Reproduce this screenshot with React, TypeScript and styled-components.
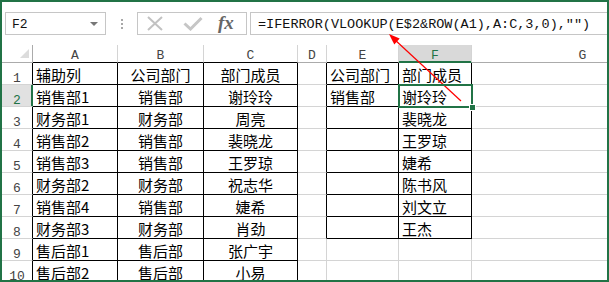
import styled, { createGlobalStyle } from 'styled-components';

const GREEN = '#217346';
const GRID = '#d4d4d4';
const HEAD_LINE = '#ababab';
const BLACK = '#000';

const GlobalStyle = createGlobalStyle`
  html, body {
    margin: 0;
    padding: 0;
    background: #fff;
  }
  body {
    font-family: "Noto Sans CJK SC", sans-serif;
  }
`;

// columns of the sheet
const columns = [
  { key: 'A', width: 85, align: 'left' },
  { key: 'B', width: 86, align: 'center' },
  { key: 'C', width: 94, align: 'center' },
  { key: 'D', width: 29, align: 'left' },
  { key: 'E', width: 72, align: 'left' },
  { key: 'F', width: 73, align: 'left' },
  { key: 'G', width: 222, align: 'left' },
] as const;

const rows: string[][] = [
  ['辅助列', '公司部门', '部门成员', '', '公司部门', '部门成员', ''],
  ['销售部1', '销售部', '谢玲玲', '', '销售部', '谢玲玲', ''],
  ['财务部1', '财务部', '周亮', '', '', '裴晓龙', ''],
  ['销售部2', '销售部', '裴晓龙', '', '', '王罗琼', ''],
  ['销售部3', '销售部', '王罗琼', '', '', '婕希', ''],
  ['财务部2', '财务部', '祝志华', '', '', '陈书风', ''],
  ['销售部4', '销售部', '婕希', '', '', '刘文立', ''],
  ['财务部3', '财务部', '肖劲', '', '', '王杰', ''],
  ['售后部1', '售后部', '张广宇', '', '', '', ''],
  ['售后部2', '售后部', '小易', '', '', '', ''],
];

const selected = { row: 2, col: 5 };

// cells with a thin black frame
const bordered = (r: number, c: number) =>
  (r >= 1 && r <= 10 && c >= 0 && c <= 2) || (r >= 1 && r <= 8 && (c === 4 || c === 5));

export default function App() {
  return (
    <>
      <GlobalStyle />
      <Frame>
        <FormulaBar>
          <NameBox>
            <span>F2</span>
            <DropArrow />
          </NameBox>
          <Dots>
            <i />
            <i />
            <i />
          </Dots>
          <IconBox>
            <svg width="16" height="15" viewBox="0 0 16 15">
              <path d="M1 1 L15 14 M15 1 L1 14" stroke="#c2c2c2" strokeWidth="2" fill="none" />
            </svg>
            <svg width="20" height="15" viewBox="0 0 20 15" style={{ marginLeft: 20 }}>
              <path d="M1.5 7.5 L7.5 13 L18.5 2" stroke="#c6c6c6" strokeWidth="3" fill="none" />
            </svg>
            <Fx>fx</Fx>
          </IconBox>
          <FormulaInput>=IFERROR(VLOOKUP(E$2&amp;ROW(A1),A:C,3,0),"")</FormulaInput>
        </FormulaBar>

        <Sheet>
          <Corner>
            <CornerMark />
          </Corner>
          {columns.map((col, c) => (
            <ColHeader
              key={col.key}
              $bottom={bordered(1, c) ? BLACK : HEAD_LINE}
              $selected={c === selected.col}
            >
              {col.key}
            </ColHeader>
          ))}

          {rows.map((row, i) => {
            const r = i + 1;
            return [
              <RowHeader key={`h${r}`} $selected={r === selected.row}>
                {r}
              </RowHeader>,
              ...row.map((value, c) => {
                const right = bordered(r, c) || bordered(r, c + 1) ? BLACK : GRID;
                const bottom = bordered(r, c) || bordered(r + 1, c) ? BLACK : GRID;
                const isSel = r === selected.row && c === selected.col;
                return (
                  <Cell
                    key={`${r}-${c}`}
                    $right={right}
                    $bottom={bottom}
                    $align={columns[c].align}
                    $active={isSel}
                  >
                    {value}
                    {isSel && (
                      <Selection>
                        <FillHandle />
                      </Selection>
                    )}
                  </Cell>
                );
              }),
            ];
          })}
        </Sheet>

        <ArrowLayer viewBox="0 0 609 282" width="609" height="282">
          <line x1="461" y1="101" x2="394" y2="39" stroke="#f00" strokeWidth="1.2" />
          <polygon points="389,34 399.7,38.6 394.3,44.4" fill="#f00" />
        </ArrowLayer>
      </Frame>
    </>
  );
}

const Frame = styled.div`
  position: relative;
  box-sizing: border-box;
  width: 609px;
  height: 282px;
  border: 2px solid ${GREEN};
  overflow: hidden;
  background: #fff;
`;

const FormulaBar = styled.div`
  display: flex;
  align-items: flex-start;
  height: 43px;
  box-sizing: border-box;
  padding: 10px 0 0 3px;
`;

const NameBox = styled.div`
  box-sizing: border-box;
  width: 101px;
  height: 23px;
  border: 1px solid #c6c6c6;
  display: flex;
  align-items: center;
  padding: 1px 6px 0 6px;
  font-family: "Liberation Mono", monospace;
  font-size: 13px;
  color: #111;
`;

const DropArrow = styled.span`
  margin-left: auto;
  margin-right: 1px;
  width: 0;
  height: 0;
  border-left: 4px solid transparent;
  border-right: 4px solid transparent;
  border-top: 4px solid #777;
`;

const Dots = styled.div`
  width: 31px;
  height: 23px;
  display: flex;
  flex-direction: column;
  align-items: center;
  justify-content: center;
  gap: 2px;

  i {
    display: block;
    width: 2px;
    height: 2px;
    background: #a8a8a8;
  }
`;

const IconBox = styled.div`
  box-sizing: border-box;
  width: 110px;
  height: 23px;
  border: 1px solid #c6c6c6;
  display: flex;
  align-items: center;
  padding-left: 9px;
`;

const Fx = styled.span`
  margin-left: 15px;
  font-family: "Liberation Serif", serif;
  font-style: italic;
  font-weight: bold;
  font-size: 19px;
  line-height: 1;
  color: #666;
  margin-top: -2px;
`;

const FormulaInput = styled.div`
  flex: 1;
  box-sizing: border-box;
  height: 23px;
  margin-left: 3px;
  border: 1px solid #c6c6c6;
  border-right: none;
  display: flex;
  align-items: center;
  padding: 1px 0 0 7px;
  font-family: "Liberation Mono", monospace;
  font-size: 13.5px;
  color: #111;
  white-space: nowrap;
`;

const Sheet = styled.div`
  display: grid;
  grid-template-columns: 31px ${columns.map((c) => `${c.width}px`).join(' ')};
  grid-template-rows: 18px;
  grid-auto-rows: 22px;
  width: max-content;
`;

const Corner = styled.div`
  position: relative;
  box-sizing: border-box;
  border-right: 1px solid ${HEAD_LINE};
  border-bottom: 1px solid ${HEAD_LINE};
`;

const CornerMark = styled.span`
  position: absolute;
  right: 3px;
  bottom: 4px;
  width: 0;
  height: 0;
  border-left: 9px solid transparent;
  border-bottom: 9px solid #dcdcdc;
`;

const ColHeader = styled.div<{ $bottom: string; $selected: boolean }>`
  box-sizing: border-box;
  border-right: 1px solid ${GRID};
  border-bottom: 1px solid ${({ $selected, $bottom }) => ($selected ? GREEN : $bottom)};
  box-shadow: ${({ $selected }) => ($selected ? `inset 0 -1px 0 ${GREEN}` : 'none')};
  background: ${({ $selected }) => ($selected ? '#d9d9d9' : '#fff')};
  color: ${({ $selected }) => ($selected ? GREEN : '#444')};
  text-align: center;
  padding-top: 4px;
  font-family: "Liberation Mono", monospace;
  font-size: 13px;
  line-height: 13px;
`;

const RowHeader = styled.div<{ $selected: boolean }>`
  box-sizing: border-box;
  border-right: 1px solid ${({ $selected }) => ($selected ? GREEN : BLACK)};
  border-bottom: 1px solid ${GRID};
  box-shadow: ${({ $selected }) => ($selected ? `inset -1px 0 0 ${GREEN}` : 'none')};
  background: ${({ $selected }) => ($selected ? '#e1e1e1' : '#fff')};
  color: ${({ $selected }) => ($selected ? GREEN : '#444')};
  text-align: center;
  padding-top: 9px;
  font-family: "Liberation Mono", monospace;
  font-size: 13px;
  line-height: 13px;
`;

const Cell = styled.div<{
  $right: string;
  $bottom: string;
  $align: 'left' | 'center';
  $active: boolean;
}>`
  position: ${({ $active }) => ($active ? 'relative' : 'static')};
  z-index: ${({ $active }) => ($active ? 2 : 'auto')};
  box-sizing: border-box;
  border-right: 1px solid ${({ $right }) => $right};
  border-bottom: 1px solid ${({ $bottom }) => $bottom};
  display: flex;
  align-items: center;
  justify-content: ${({ $align }) => ($align === 'center' ? 'center' : 'flex-start')};
  padding: 1px 3px 0 3px;
  font-family: "Noto Sans CJK SC", sans-serif;
  font-size: 15px;
  line-height: 1;
  color: #000;
  white-space: nowrap;
`;

const Selection = styled.span`
  position: absolute;
  top: -1px;
  left: -1px;
  right: -2px;
  bottom: -2px;
  border: 2px solid ${GREEN};
  pointer-events: none;
`;

const FillHandle = styled.span`
  position: absolute;
  right: -5px;
  bottom: -5px;
  width: 5px;
  height: 5px;
  background: ${GREEN};
  border: 1px solid #fff;
`;

const ArrowLayer = styled.svg`
  position: absolute;
  top: -2px;
  left: -2px;
  pointer-events: none;
`;
